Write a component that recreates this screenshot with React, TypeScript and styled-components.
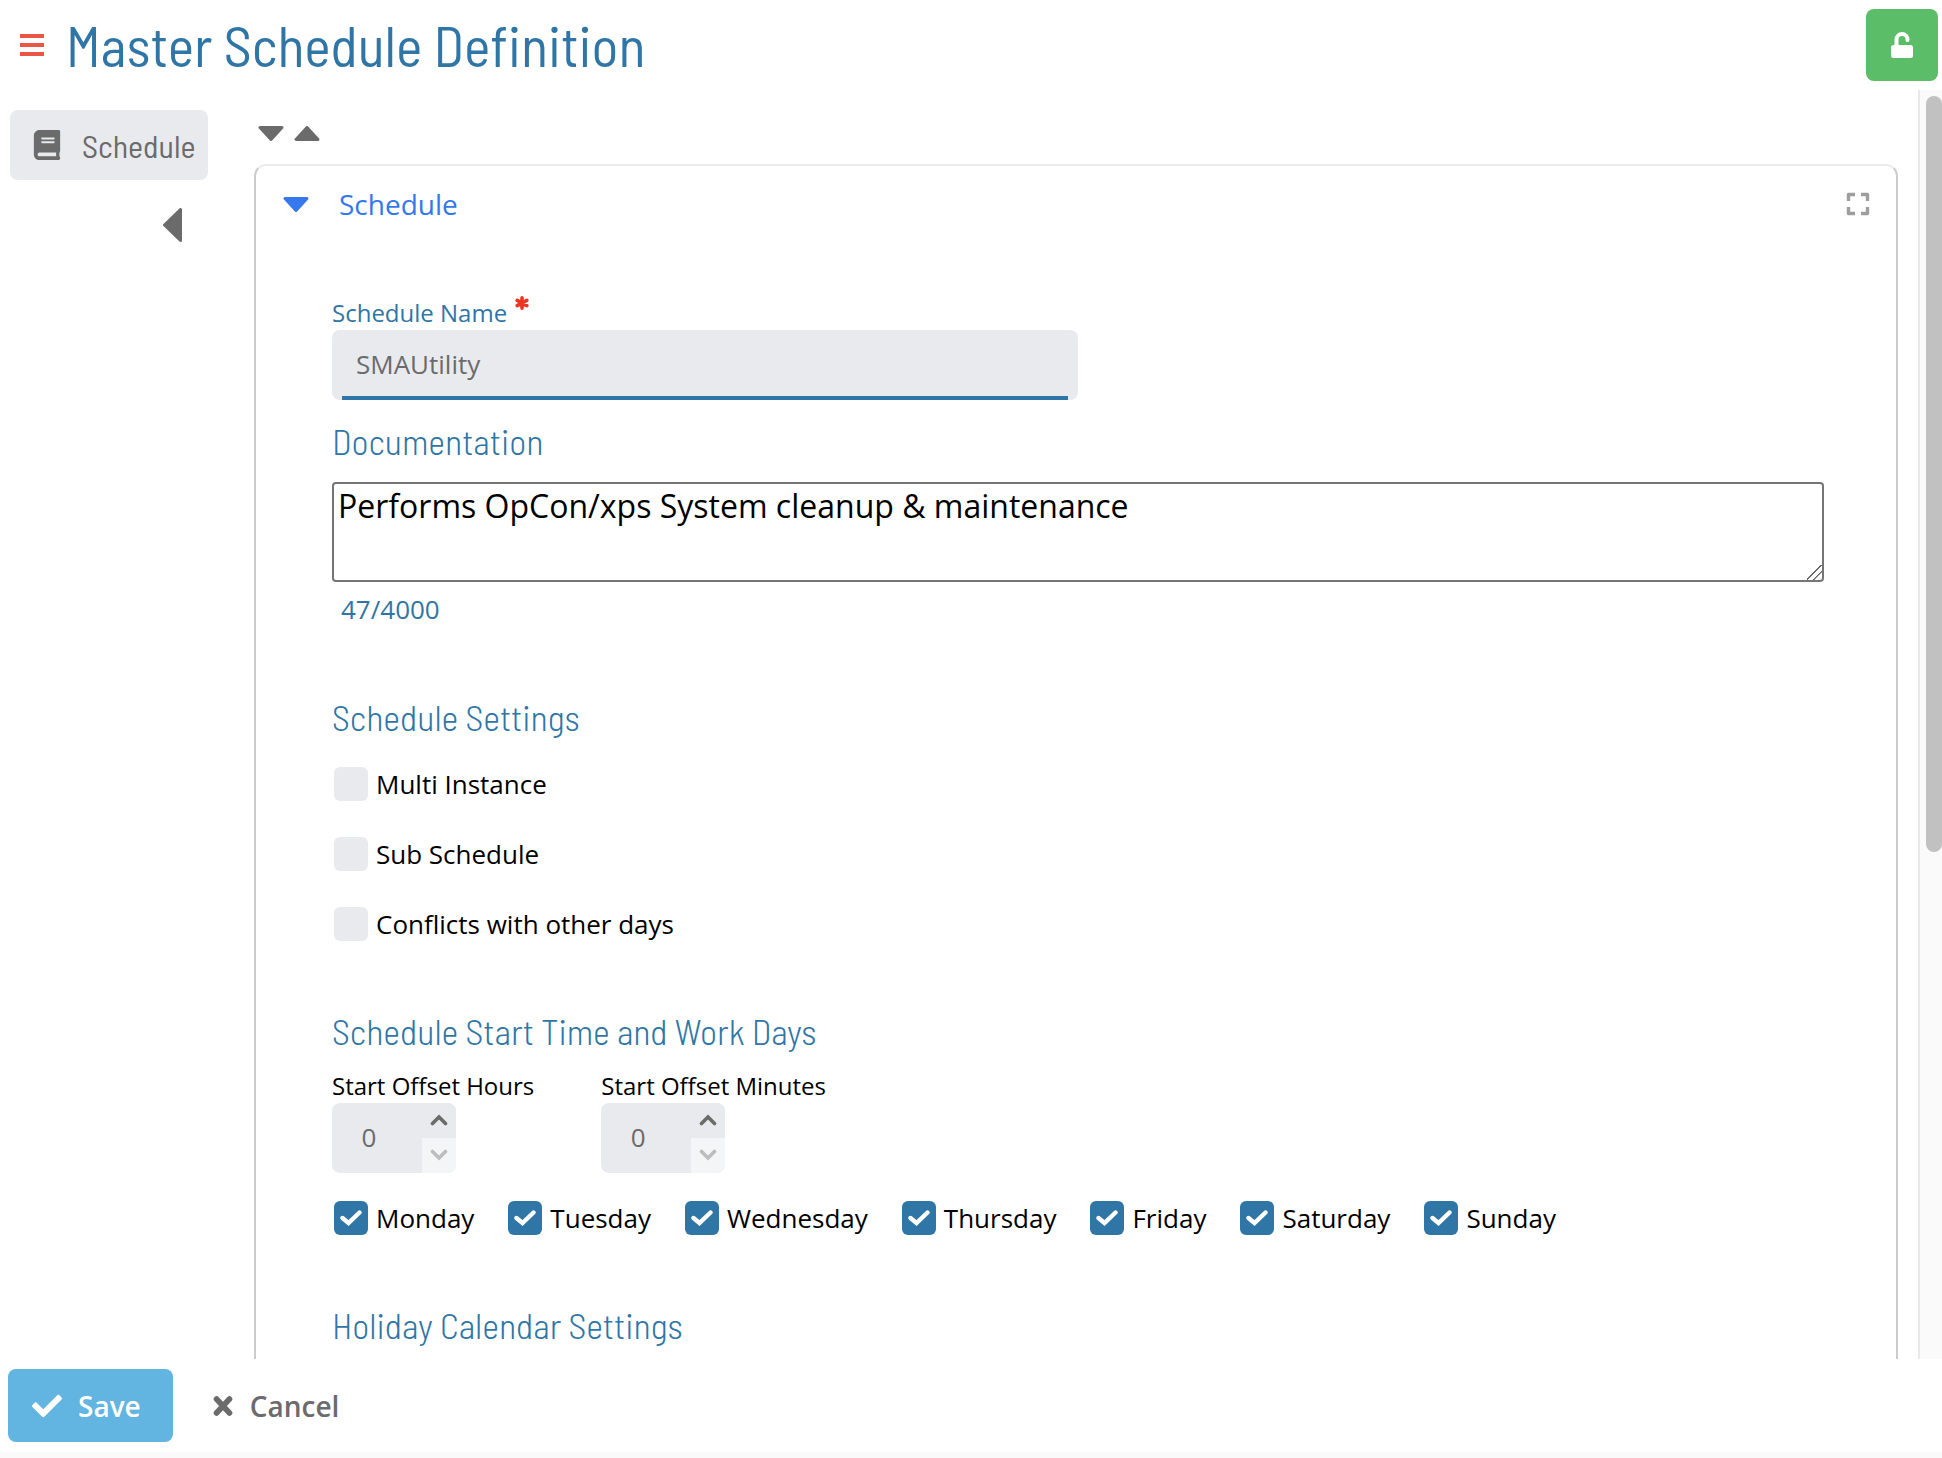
import React, { useEffect, useRef, useState } from "react";
import styled, { createGlobalStyle } from "styled-components";
import { FaBook, FaCheck } from "react-icons/fa";

const color = {
  brand: "#2f76a6",
  link: "#3478ec",
  grey: "#6b6b6b",
  field: "#e9eaee",
  fieldLight: "#f4f5f7",
  danger: "#ee3524",
};

const display = '"Barlow Semi Condensed", "Roboto Condensed", Roboto, sans-serif';

const GlobalStyle = createGlobalStyle`
  *, *::before, *::after { box-sizing: border-box; }
  body {
    margin: 0;
    background: #fff;
    color: #000;
    font-family: "Open Sans", "Noto Sans", sans-serif;
    font-size: 26px;
  }
  button, input, textarea { font: inherit; margin: 0; }
  svg { display: block; flex: none; }
`;

const Page = styled.div`
  display: flex;
  flex-direction: column;
  height: 100vh;
  border-bottom: 6px solid #fafafa;
`;

const Header = styled.header`
  display: flex;
  align-items: center;
  flex: none;
  gap: 20px;
  height: 90px;
  padding: 0 4px 0 18px;
`;

const IconButton = styled.button`
  display: flex;
  padding: 0;
  border: 0;
  background: none;
  color: ${color.grey};
  cursor: pointer;
`;

const Title = styled.h1`
  flex: 1;
  margin: 0;
  color: ${color.brand};
  font: 400 56px/64px ${display};
`;

const LockButton = styled.button`
  display: grid;
  place-items: center;
  width: 72px;
  height: 72px;
  padding: 0;
  border: 0;
  border-radius: 8px;
  background: #5bbd68;
  color: #fff;
  cursor: pointer;
`;

const Body = styled.div`
  display: flex;
  flex: 1;
  min-height: 0;
`;

const Sidebar = styled.nav`
  display: flex;
  flex-direction: column;
  align-items: flex-start;
  flex: none;
  width: 254px;
  padding: 20px 46px 0 10px;
`;

const NavItem = styled.a`
  display: flex;
  align-items: center;
  gap: 20px;
  width: 100%;
  height: 70px;
  padding-left: 22px;
  border-radius: 8px;
  background: ${color.field};
  color: ${color.grey};
  font: 400 32px/40px ${display};
  text-decoration: none;
`;

const Collapse = styled(IconButton)`
  align-self: flex-end;
  margin: 28px 26px 0 0;
`;

const Content = styled.main`
  flex: 1;
  min-width: 0;
  padding: 36px 20px 0 0;
  overflow-y: auto;
  scrollbar-width: none;
`;

const FoldTools = styled.div`
  display: flex;
  gap: 10px;
  padding: 0 4px;
  margin-bottom: 23px;
`;

const Card = styled.section`
  padding-bottom: 873px;
  border: 2px solid #ccc;
  border-top-color: #ededed;
  border-radius: 12px;
`;

const CardHeader = styled.div`
  display: flex;
  align-items: center;
  justify-content: space-between;
  height: 76px;
  padding: 0 26px 0 27px;
`;

const CardToggle = styled.button`
  display: flex;
  align-items: center;
  gap: 30px;
  padding: 0;
  border: 0;
  background: none;
  color: ${color.link};
  font-size: 28px;
  line-height: 40px;
  cursor: pointer;
`;

const Form = styled.form`
  display: flex;
  flex-direction: column;
  padding: 54px 72px 0 76px;
`;

const Label = styled.label<{ $brand?: boolean }>`
  display: flex;
  gap: 8px;
  color: ${(p) => (p.$brand ? color.brand : "#000")};
  font-size: 24px;
  line-height: 34px;
`;

const NameInput = styled.input`
  width: 50%;
  height: 70px;
  padding: 0 24px 2px;
  border: 0;
  border-radius: 8px;
  background: linear-gradient(${color.brand}, ${color.brand}) center bottom / calc(100% - 20px) 4px no-repeat ${color.field};
  color: ${color.grey};
`;

const Heading = styled.h2`
  margin: 0;
  color: ${color.brand};
  font: 300 36px/40px ${display};
`;

const DocHeading = styled(Heading)`
  margin: 21px 0;
`;

const DocText = styled.textarea`
  width: 100%;
  height: 100px;
  padding: 2px 4px;
  border: 2px solid #757575;
  border-radius: 4px;
  background: #fff;
  color: #000;
  font-size: 32px;
  line-height: 40px;
  resize: vertical;
  &::-webkit-resizer {
    background: linear-gradient(
      135deg,
      transparent 44%, #666 45%, #666 50%, transparent 51%,
      transparent 67%, #666 68%, #666 73%, transparent 74%
    );
  }
`;

const Counter = styled.output`
  padding: 9px 9px 0;
  color: ${color.brand};
  line-height: 36px;
`;

const Group = styled.section`
  padding-top: 70px;
`;

const CheckColumn = styled.div`
  display: flex;
  flex-direction: column;
  align-items: flex-start;
  gap: 36px;
  padding: 30px 2px 0;
`;

const CheckRow = styled.div`
  display: flex;
  flex-wrap: wrap;
  gap: 34px;
  padding: 28px 2px 0;
`;

const CheckLabel = styled.label`
  display: flex;
  align-items: center;
  gap: 8px;
  line-height: 34px;
`;

const CheckStack = styled.span`
  display: grid;
  place-items: center;
  & > * { grid-area: 1 / 1; }
  & > svg { pointer-events: none; visibility: hidden; }
  & > input:checked + svg { visibility: visible; }
`;

const CheckInput = styled.input`
  appearance: none;
  width: 34px;
  height: 34px;
  border-radius: 6px;
  background: ${color.field};
  &:checked { background: ${color.brand}; }
`;

const Offsets = styled.div`
  display: flex;
  padding-top: 18px;
  gap: 67px;
`;

const Spinner = styled.div`
  display: flex;
  width: 124px;
  height: 70px;
  border-radius: 8px;
  overflow: hidden;
  background: ${color.field};
`;

const SpinnerInput = styled.input`
  flex: 1;
  min-width: 0;
  padding: 0 16px 2px 0;
  border: 0;
  background: none;
  color: ${color.grey};
  text-align: center;
  appearance: textfield;
  &::-webkit-inner-spin-button { appearance: none; display: none; }
`;

const SpinnerButtons = styled.div`
  display: flex;
  flex-direction: column;
  width: 34px;
`;

const SpinnerButton = styled.button`
  display: grid;
  place-items: center;
  flex: 1;
  padding: 0 0 2px;
  border: 0;
  background: ${color.field};
  color: ${color.grey};
  &:disabled { background: ${color.fieldLight}; color: #bdbdbd; }
`;

const ScrollTrack = styled.div`
  flex: none;
  width: 24px;
  padding: 6px 0 0 6px;
  border-left: 2px solid #e8e8e8;
  background: #fafafa;
`;

const ScrollThumb = styled.div`
  border-radius: 8px;
  background: #c1c1c1;
`;

const Footer = styled.footer`
  display: flex;
  flex: none;
  align-items: center;
  gap: 15px;
  height: 93px;
  padding: 0 8px;
`;

const ActionButton = styled.button<{ $primary?: boolean }>`
  display: flex;
  align-items: center;
  gap: 16px;
  height: 73px;
  padding: 0 ${(p) => (p.$primary ? "32px 0 24px" : "24px")};
  border: 0;
  border-radius: 8px;
  background: ${(p) => (p.$primary ? "#62b4e1" : "none")};
  color: ${(p) => (p.$primary ? "#fff" : color.grey)};
  font-size: 28px;
  font-weight: 600;
  cursor: pointer;
`;

const carets = {
  down: { w: 26, h: 15, d: "M2 1.5H24L13 13.5Z" },
  up: { w: 26, h: 15, d: "M2 13.5H24L13 1.5Z" },
  left: { w: 19, h: 34, d: "M17.5 1.5V32.5L1.5 17Z" },
};

function Caret({ to }: { to: keyof typeof carets }) {
  const { w, h, d } = carets[to];
  return (
    <svg width={w} height={h} viewBox={`0 0 ${w} ${h}`} aria-hidden="true">
      <path d={d} fill="currentColor" stroke="currentColor" strokeWidth="3" strokeLinejoin="round" />
    </svg>
  );
}

function Chevron({ up }: { up?: boolean }) {
  return (
    <svg width="18" height="12" viewBox="0 0 18 12" aria-hidden="true">
      <path
        d={up ? "M2.5 9.5L9 3L15.5 9.5" : "M2.5 2.5L9 9L15.5 2.5"}
        fill="none"
        stroke="currentColor"
        strokeWidth="3.6"
        strokeLinecap="round"
      />
    </svg>
  );
}

function RequiredMark() {
  return (
    <svg width="14" height="14" viewBox="0 0 14 14" aria-hidden="true">
      <path
        d="M7 1.8V12.2M2.2 4.4L11.8 9.6M2.2 9.6L11.8 4.4"
        stroke={color.danger}
        strokeWidth="3.6"
        strokeLinecap="round"
      />
    </svg>
  );
}

function Cross() {
  return (
    <svg width="22" height="22" viewBox="0 0 22 22" aria-hidden="true">
      <path d="M4.5 4L17.5 18M17.5 4L4.5 18" stroke="currentColor" strokeWidth="5.6" strokeLinecap="round" />
    </svg>
  );
}

function Check({ label, checked }: { label: string; checked?: boolean }) {
  return (
    <CheckLabel>
      <CheckStack>
        <CheckInput type="checkbox" defaultChecked={checked} />
        <svg width="22" height="16" viewBox="0 0 22 16" aria-hidden="true">
          <path d="M2.5 8L8.5 13L19.5 2.5" fill="none" stroke="#fff" strokeWidth="4.4" strokeLinecap="round" />
        </svg>
      </CheckStack>
      {label}
    </CheckLabel>
  );
}

function OffsetField({ id, label }: { id: string; label: string }) {
  const [value, setValue] = useState(0);
  return (
    <div>
      <Label htmlFor={id}>{label}</Label>
      <Spinner>
        <SpinnerInput
          id={id}
          type="number"
          min={0}
          value={value}
          onChange={(e) => setValue(Math.max(0, Number(e.target.value)))}
        />
        <SpinnerButtons>
          <SpinnerButton type="button" aria-label="Increase" onClick={() => setValue(value + 1)}>
            <Chevron up />
          </SpinnerButton>
          <SpinnerButton type="button" aria-label="Decrease" disabled={value === 0} onClick={() => setValue(value - 1)}>
            <Chevron />
          </SpinnerButton>
        </SpinnerButtons>
      </Spinner>
    </div>
  );
}

const settings = ["Multi Instance", "Sub Schedule", "Conflicts with other days"];
const days = ["Monday", "Tuesday", "Wednesday", "Thursday", "Friday", "Saturday", "Sunday"];

export default function App() {
  const contentRef = useRef<HTMLElement>(null);
  const [thumb, setThumb] = useState({ height: 0, top: 0 });
  const [doc, setDoc] = useState("Performs OpCon/xps System cleanup & maintenance");

  const measure = () => {
    const el = contentRef.current;
    if (!el) return;
    const ratio = el.clientHeight / el.scrollHeight;
    setThumb({ height: Math.round(el.clientHeight * ratio), top: Math.round(el.scrollTop * ratio) });
  };

  useEffect(() => {
    measure();
    window.addEventListener("resize", measure);
    return () => window.removeEventListener("resize", measure);
  }, []);

  return (
    <>
      <GlobalStyle />
      <Page>
        <Header>
          <IconButton type="button" aria-label="Menu">
            <svg width="28" height="24" viewBox="0 0 28 24" fill="#ea5545" aria-hidden="true">
              <path d="M2 1H26V5H2ZM2 10H26V14H2ZM2 19H26V23H2Z" />
            </svg>
          </IconButton>
          <Title>Master Schedule Definition</Title>
          <LockButton type="button" aria-label="Unlocked">
            <svg width="22" height="26" viewBox="0 0 22 26" aria-hidden="true">
              <rect y="13" width="22" height="13" rx="2.5" fill="currentColor" />
              <path d="M5.5 14V7.5A5.5 5.5 0 0 1 16.5 7.5V8" fill="none" stroke="currentColor" strokeWidth="4" strokeLinecap="round" />
            </svg>
          </LockButton>
        </Header>

        <Body>
          <Sidebar aria-label="Sections">
            <NavItem href="#schedule">
              <FaBook size={30} />
              Schedule
            </NavItem>
            <Collapse type="button" aria-label="Collapse sidebar">
              <Caret to="left" />
            </Collapse>
          </Sidebar>

          <Content ref={contentRef} onScroll={measure}>
            <FoldTools>
              <IconButton type="button" aria-label="Expand all">
                <Caret to="down" />
              </IconButton>
              <IconButton type="button" aria-label="Collapse all">
                <Caret to="up" />
              </IconButton>
            </FoldTools>

            <Card id="schedule">
              <CardHeader>
                <CardToggle type="button" aria-expanded="true">
                  <Caret to="down" />
                  Schedule
                </CardToggle>
                <IconButton type="button" aria-label="Full screen">
                  <svg width="24" height="24" viewBox="0 0 24 24" aria-hidden="true">
                    <path
                      d="M2.5 9V2.5H9M15 2.5H21.5V9M21.5 15V21.5H15M9 21.5H2.5V15"
                      fill="none"
                      stroke="#9e9e9e"
                      strokeWidth="3.4"
                      strokeLinejoin="round"
                    />
                  </svg>
                </IconButton>
              </CardHeader>

              <Form onSubmit={(e) => e.preventDefault()}>
                <Label htmlFor="name" $brand>
                  Schedule Name
                  <RequiredMark />
                </Label>
                <NameInput id="name" type="text" defaultValue="SMAUtility" />

                <DocHeading as="label" htmlFor="doc">
                  Documentation
                </DocHeading>
                <DocText id="doc" maxLength={4000} value={doc} onChange={(e) => setDoc(e.target.value)} />
                <Counter htmlFor="doc">{doc.length}/4000</Counter>

                <Group>
                  <Heading>Schedule Settings</Heading>
                  <CheckColumn>
                    {settings.map((s) => (
                      <Check key={s} label={s} />
                    ))}
                  </CheckColumn>
                </Group>

                <Group>
                  <Heading>Schedule Start Time and Work Days</Heading>
                  <Offsets>
                    <OffsetField id="hours" label="Start Offset Hours" />
                    <OffsetField id="minutes" label="Start Offset Minutes" />
                  </Offsets>
                  <CheckRow>
                    {days.map((d) => (
                      <Check key={d} label={d} checked />
                    ))}
                  </CheckRow>
                </Group>

                <Group>
                  <Heading>Holiday Calendar Settings</Heading>
                </Group>
              </Form>
            </Card>
          </Content>

          <ScrollTrack aria-hidden="true">
            <ScrollThumb style={{ height: thumb.height, marginTop: thumb.top }} />
          </ScrollTrack>
        </Body>

        <Footer>
          <ActionButton type="button" $primary>
            <FaCheck size={30} />
            Save
          </ActionButton>
          <ActionButton type="button">
            <Cross />
            Cancel
          </ActionButton>
        </Footer>
      </Page>
    </>
  );
}
